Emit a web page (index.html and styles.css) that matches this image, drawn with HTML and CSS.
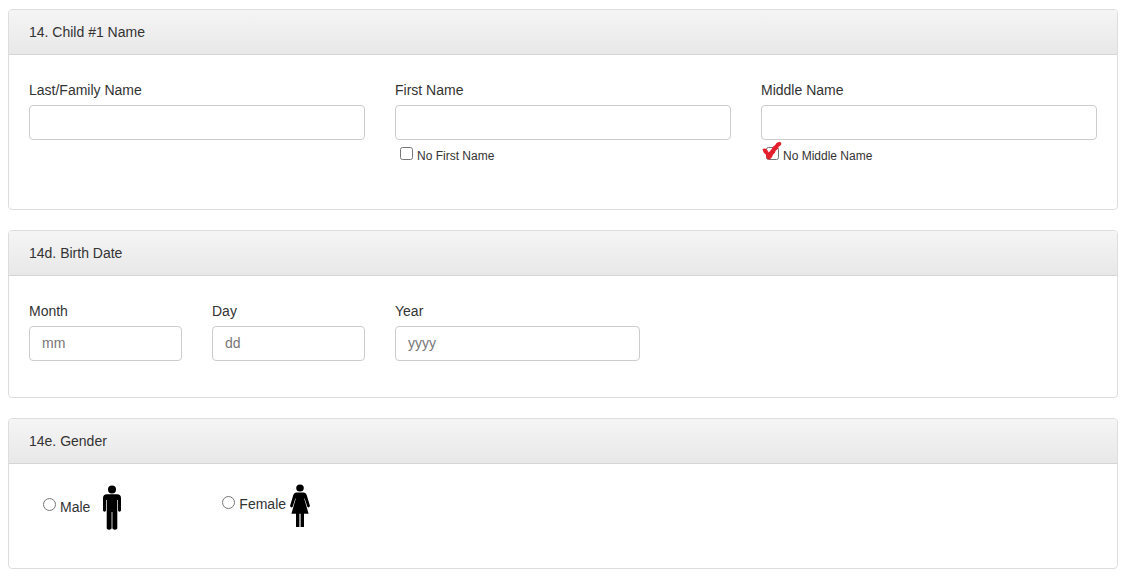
FILE: index.html
```html
<!DOCTYPE html>
<html lang="en">
<head>
<meta charset="utf-8">
<title>Child Information</title>
<link rel="stylesheet" href="styles.css">
</head>
<body>
<form class="form">
  <section class="panel">
    <h2 class="panel-heading">14. Child #1 Name</h2>
    <div class="panel-body panel-body-tall">
      <div class="field span-4">
        <label for="last">Last/Family Name</label>
        <input class="control" id="last" type="text">
      </div>
      <div class="field span-4">
        <label for="first">First Name</label>
        <input class="control" id="first" type="text">
        <div class="check">
          <span class="box"><input id="no-first" type="checkbox"></span>
          <label for="no-first">No First Name</label>
        </div>
      </div>
      <div class="field span-4">
        <label for="middle">Middle Name</label>
        <input class="control" id="middle" type="text">
        <div class="check">
          <span class="box"><input id="no-middle" type="checkbox">
            <svg class="mark" viewBox="0 0 20 20" aria-hidden="true"><path d="M0.500 8.500Q2 6.800 4.500 8L6.800 11.500L9.500 8.200L11.300 5.500L13.200 4L14.500 2L17.500 0.800Q20.300 1.600 18.800 4.200L16.800 5.500L15.800 8L13.800 9.500L12.800 12L11 13.500L10.200 15.800L8.200 18.200Q5.500 19 4.500 17L3.800 13.500L1.800 11.800Z" fill="#e3202c"/></svg>
          </span>
          <label for="no-middle">No Middle Name</label>
        </div>
      </div>
    </div>
  </section>

  <section class="panel">
    <h2 class="panel-heading">14d. Birth Date</h2>
    <div class="panel-body">
      <div class="field span-2">
        <label for="month">Month</label>
        <input class="control" id="month" type="text" placeholder="mm">
      </div>
      <div class="field span-2">
        <label for="day">Day</label>
        <input class="control" id="day" type="text" placeholder="dd">
      </div>
      <div class="field span-3">
        <label for="year">Year</label>
        <input class="control" id="year" type="text" placeholder="yyyy">
      </div>
    </div>
  </section>

  <section class="panel">
    <h2 class="panel-heading">14e. Gender</h2>
    <div class="panel-body gender">
      <div class="option male">
        <input id="male" type="radio" name="gender">
        <label for="male">Male</label>
        <svg class="person" viewBox="0 0 20 45" aria-hidden="true"><circle cx="10" cy="4.500" r="4"/><path d="M5 9.300H15Q19 9.500 19 13V25.500Q17.500 28 16 25.500V15H15.300V43.500Q13 46 10.400 43.500V27H9.600V43.500Q7 46 4.700 43.500V15H4V25.500Q2.500 28 1 25.500V13Q1 9.500 5 9.300Z"/></svg>
      </div>
      <div class="option female">
        <input id="female" type="radio" name="gender">
        <label for="female">Female</label>
        <svg class="person" viewBox="0 0 20 45" aria-hidden="true"><ellipse cx="10" cy="4" rx="3.800" ry="3.600"/><path d="M6 8.600H14Q15.800 8.700 16.700 11L20 22Q19 24.500 17.300 22.800L14.700 14.500H14.200L18.600 29.800H14V43H10.600V29.800H9.400V43H6V29.800H1.400L5.800 14.500H5.300L2.700 22.800Q1 24.500 0 22L3.300 11Q4.200 8.700 6 8.600Z"/></svg>
      </div>
    </div>
  </section>
</form>
</body>
</html>
```
FILE: styles.css
```css
* { box-sizing: border-box; }

body {
  margin: 9px 10px 8px 8px;
  background: #fff;
  color: #333;
  font: 14px/20px "Liberation Sans", Arial, sans-serif;
}

input { margin: 0; }

.form {
  display: flex;
  flex-direction: column;
  gap: 20px;
}

.panel {
  border: 1px solid #ddd;
  border-radius: 4px;
  overflow: hidden;
}

.panel-heading {
  margin: 0;
  padding: 12px 20px;
  border-bottom: 1px solid #d5d5d5;
  background: linear-gradient(#f5f5f5, #e8e8e8);
  font-size: 14px;
  font-weight: normal;
}

.panel-body {
  display: grid;
  grid-template-columns: repeat(12, minmax(0, 1fr));
  column-gap: 30px;
  padding: 25px 20px 36px;
}

.panel-body-tall { padding-bottom: 44px; }

.span-2 { grid-column: span 2; }
.span-3 { grid-column: span 3; }
.span-4 { grid-column: span 4; }

.field {
  display: flex;
  flex-direction: column;
  gap: 5px;
}

.control {
  width: 100%;
  height: 35px;
  padding: 5px 12px 7px;
  border: 1px solid #ccc;
  border-radius: 4px;
  background: #fff;
  color: #555;
  font: inherit;
}

.control::placeholder { color: #777; }

.check {
  display: flex;
  align-items: flex-start;
  gap: 4px;
  padding: 2px 0 0 5px;
  font-size: 12px;
  line-height: 18px;
}

.box {
  position: relative;
  display: flex;
}

.mark {
  position: absolute;
  left: -4px;
  top: -6px;
  width: 20px;
  height: 20px;
  pointer-events: none;
}

.gender {
  display: flex;
  align-items: flex-start;
  column-gap: 100px;
  padding: 20px 34px 38px;
}

.option {
  display: flex;
  align-items: flex-start;
  gap: 4px;
}

.option input { margin-top: 13px; }
.option label { padding-top: 12px; }

.person {
  width: 20px;
  height: 45px;
}

.male { padding-top: 1px; }
.male .person { margin-left: 8px; }
.female label { padding-top: 10px; }
.female input { margin-top: 12px; }
```
